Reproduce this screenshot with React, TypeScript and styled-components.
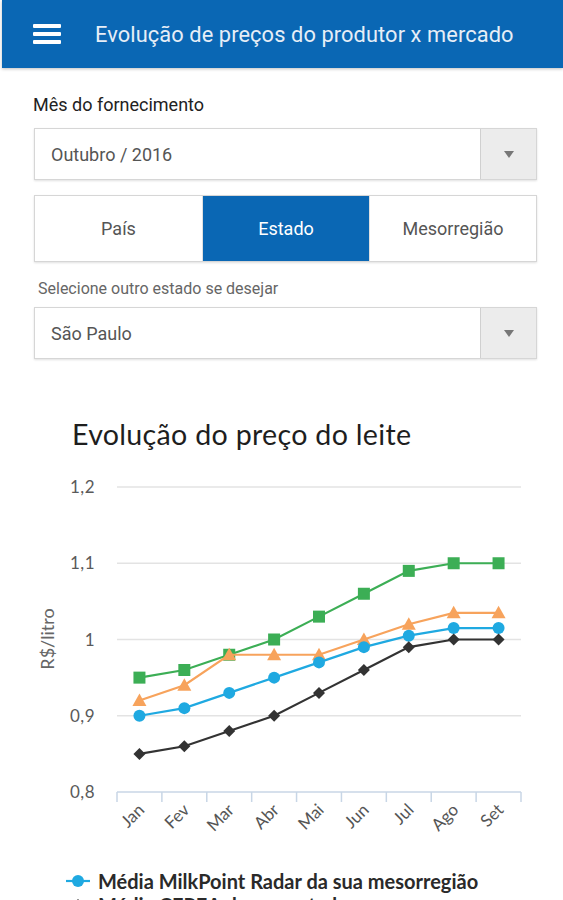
import styled, { createGlobalStyle } from 'styled-components';

const GlobalStyle = createGlobalStyle`
body {
  margin: 0;
  background: #ffffff;
  font-family: Roboto, 'Liberation Sans', sans-serif;
}
`;

const Page = styled.div`
width: 563px;
`;

const Header = styled.header`
display: flex;
align-items: center;
height: 68px;
margin-left: 2px;
padding-left: 31px;
background: #0a67b4;
box-shadow: 0 1px 3px rgba(0, 0, 0, 0.25);
`;

const Burger = styled.div`
display: flex;
flex-direction: column;
gap: 4px;
width: 28px;
margin-right: 34px;
& > span {
  display: block;
  height: 4px;
  background: #ffffff;
  border-radius: 1px;
}
`;

const HeaderTitle = styled.h1`
margin: 0;
font-size: 21.8px;
font-weight: 400;
color: #e6eef7;
letter-spacing: 0.1px;
`;

const Form = styled.div`
display: flex;
flex-direction: column;
padding: 0 26px 0 34px;
`;

const Label = styled.div<{ $small?: boolean }>`
font-size: ${p => (p.$small ? '16px' : '18px')};
color: ${p => (p.$small ? '#666666' : '#222222')};
margin: ${p => (p.$small ? '17px 0 8px 4px' : '27px 0 13px -1px')};
line-height: 20px;
`;

const Select = styled.div`
display: flex;
height: 52px;
border: 1px solid #d6d6d6;
box-sizing: border-box;
box-shadow: 0 1px 2px rgba(0, 0, 0, 0.12);
background: #ffffff;
`;

const SelectValue = styled.div`
flex: 1;
display: flex;
align-items: center;
padding-left: 16px;
font-size: 18px;
color: #555555;
`;

const SelectButton = styled.div`
width: 55px;
display: flex;
align-items: center;
justify-content: center;
background: #ececec;
border-left: 1px solid #d0d0d0;
`;

const Caret = styled.div`
width: 0;
height: 0;
border-left: 5px solid transparent;
border-right: 5px solid transparent;
border-top: 7px solid #777777;
`;

const Segment = styled.div`
display: grid;
grid-template-columns: 1fr 1fr 1fr;
height: 67px;
margin-top: 15px;
border: 1px solid #d6d6d6;
box-sizing: border-box;
box-shadow: 0 1px 2px rgba(0, 0, 0, 0.12);
`;

const SegmentItem = styled.div<{ $active?: boolean }>`
display: flex;
align-items: center;
justify-content: center;
font-size: 18px;
background: ${p => (p.$active ? '#0a67b4' : '#ffffff')};
color: ${p => (p.$active ? '#ffffff' : '#555555')};
& + & {
  border-left: 1px solid #e0e0e0;
}
`;

const ChartSection = styled.section`
font-family: Lato, 'Open Sans', sans-serif;
`;

const ChartTitle = styled.h2`
margin: 58px 0 0 72px;
font-size: 28.6px;
font-weight: 400;
color: #1e1e1e;
line-height: 34px;
letter-spacing: 0.3px;
`;

const ChartSvg = styled.svg`
display: block;
margin-top: 18px;
`;

const Legend = styled.div`
display: flex;
flex-direction: column;
padding-left: 66px;
margin-top: 20px;
`;

const LegendRow = styled.div`
display: flex;
align-items: center;
gap: 8px;
font-size: 20px;
line-height: 24px;
font-weight: 700;
color: #2a2a2a;
`;

type Series = { color: string; marker: 'square' | 'triangle' | 'circle' | 'diamond'; values: number[] };

const months = ['Jan', 'Fev', 'Mar', 'Abr', 'Mai', 'Jun', 'Jul', 'Ago', 'Set'];

const series: Series[] = [
  { color: '#3cae55', marker: 'square', values: [0.95, 0.96, 0.98, 1.0, 1.03, 1.06, 1.09, 1.1, 1.1] },
  { color: '#f7a35c', marker: 'triangle', values: [0.92, 0.94, 0.98, 0.98, 0.98, 1.0, 1.02, 1.035, 1.035] },
  { color: '#1fa9e1', marker: 'circle', values: [0.9, 0.91, 0.93, 0.95, 0.97, 0.99, 1.005, 1.015, 1.015] },
  { color: '#333333', marker: 'diamond', values: [0.85, 0.86, 0.88, 0.9, 0.93, 0.96, 0.99, 1.0, 1.0] },
];

// plot coordinates inside the svg
const left = 117;
const right = 521;
const bottom = 323;
const step = (right - left) / months.length;
const xAt = (i: number) => left + step * (i + 0.5);
const yAt = (v: number) => bottom - (v - 0.8) * 762.5;

function Marker({ kind, x, y, color }: { kind: Series['marker']; x: number; y: number; color: string }) {
  if (kind === 'square') return <rect x={x - 6} y={y - 6} width={12} height={12} fill={color} />;
  if (kind === 'circle') return <circle cx={x} cy={y} r={6} fill={color} />;
  if (kind === 'triangle') return <path d={`M${x} ${y - 7} L${x + 7} ${y + 5.5} L${x - 7} ${y + 5.5} Z`} fill={color} />;
  return <path d={`M${x} ${y - 6} L${x + 6} ${y} L${x} ${y + 6} L${x - 6} ${y} Z`} fill={color} />;
}

function PriceChart() {
  const ticks = [1.2, 1.1, 1.0, 0.9];
  return (
    <ChartSvg width={563} height={380} viewBox="0 0 563 380">
      {ticks.map(t => (
        <line key={t} x1={left} x2={right} y1={yAt(t)} y2={yAt(t)} stroke="#e3e3e3" strokeWidth={1.5} />
      ))}
      {[1.2, 1.1, 1.0, 0.9, 0.8].map(t => (
        <text key={t} x={95} y={yAt(t) + 6} textAnchor="end" fontSize={17} fill="#5a5a5a" letterSpacing={0.5}>
          {String(t === 1 ? 1 : t).replace('.', ',')}
        </text>
      ))}
      <text transform="translate(54 170) rotate(-90)" textAnchor="middle" fontSize={18} fill="#666666">
        R$/litro
      </text>
      <line x1={left} x2={right} y1={bottom} y2={bottom} stroke="#c8d6e6" strokeWidth={1.5} />
      {Array.from({ length: months.length + 1 }).map((_, k) => (
        <line key={k} x1={left + step * k} x2={left + step * k} y1={bottom} y2={bottom + 10} stroke="#c8d6e6" strokeWidth={1.5} />
      ))}
      {months.map((m, i) => (
        <text
          key={m}
          transform={`translate(${xAt(i) + 6} ${bottom + 19}) rotate(-45)`}
          textAnchor="end"
          fontSize={17}
          fill="#555555"
        >
          {m}
        </text>
      ))}
      {series.map(s => (
        <g key={s.color}>
          <polyline
            points={s.values.map((v, i) => `${xAt(i)},${yAt(v)}`).join(' ')}
            fill="none"
            stroke={s.color}
            strokeWidth={2.2}
          />
          {s.values.map((v, i) => (
            <Marker key={i} kind={s.marker} x={xAt(i)} y={yAt(v)} color={s.color} />
          ))}
        </g>
      ))}
    </ChartSvg>
  );
}

function LegendMark({ color, marker }: { color: string; marker: Series['marker'] }) {
  return (
    <svg width={24} height={12} viewBox="0 0 24 12">
      <line x1={0} x2={24} y1={6} y2={6} stroke={color} strokeWidth={2.2} />
      <Marker kind={marker} x={12} y={6} color={color} />
    </svg>
  );
}

export default function App() {
  return (
    <Page>
      <GlobalStyle />
      <Header>
        <Burger>
          <span />
          <span />
          <span />
        </Burger>
        <HeaderTitle>Evolução de preços do produtor x mercado</HeaderTitle>
      </Header>
      <Form>
        <Label>Mês do fornecimento</Label>
        <Select>
          <SelectValue>Outubro / 2016</SelectValue>
          <SelectButton><Caret /></SelectButton>
        </Select>
        <Segment>
          <SegmentItem>País</SegmentItem>
          <SegmentItem $active>Estado</SegmentItem>
          <SegmentItem>Mesorregião</SegmentItem>
        </Segment>
        <Label $small>Selecione outro estado se desejar</Label>
        <Select>
          <SelectValue>São Paulo</SelectValue>
          <SelectButton><Caret /></SelectButton>
        </Select>
      </Form>
      <ChartSection>
        <ChartTitle>Evolução do preço do leite</ChartTitle>
        <PriceChart />
        <Legend>
          <LegendRow>
            <LegendMark color="#1fa9e1" marker="circle" />
            Média MilkPoint Radar da sua mesorregião
          </LegendRow>
          <LegendRow>
            <LegendMark color="#333333" marker="diamond" />
            Média CEPEA do seu estado
          </LegendRow>
        </Legend>
      </ChartSection>
    </Page>
  );
}
